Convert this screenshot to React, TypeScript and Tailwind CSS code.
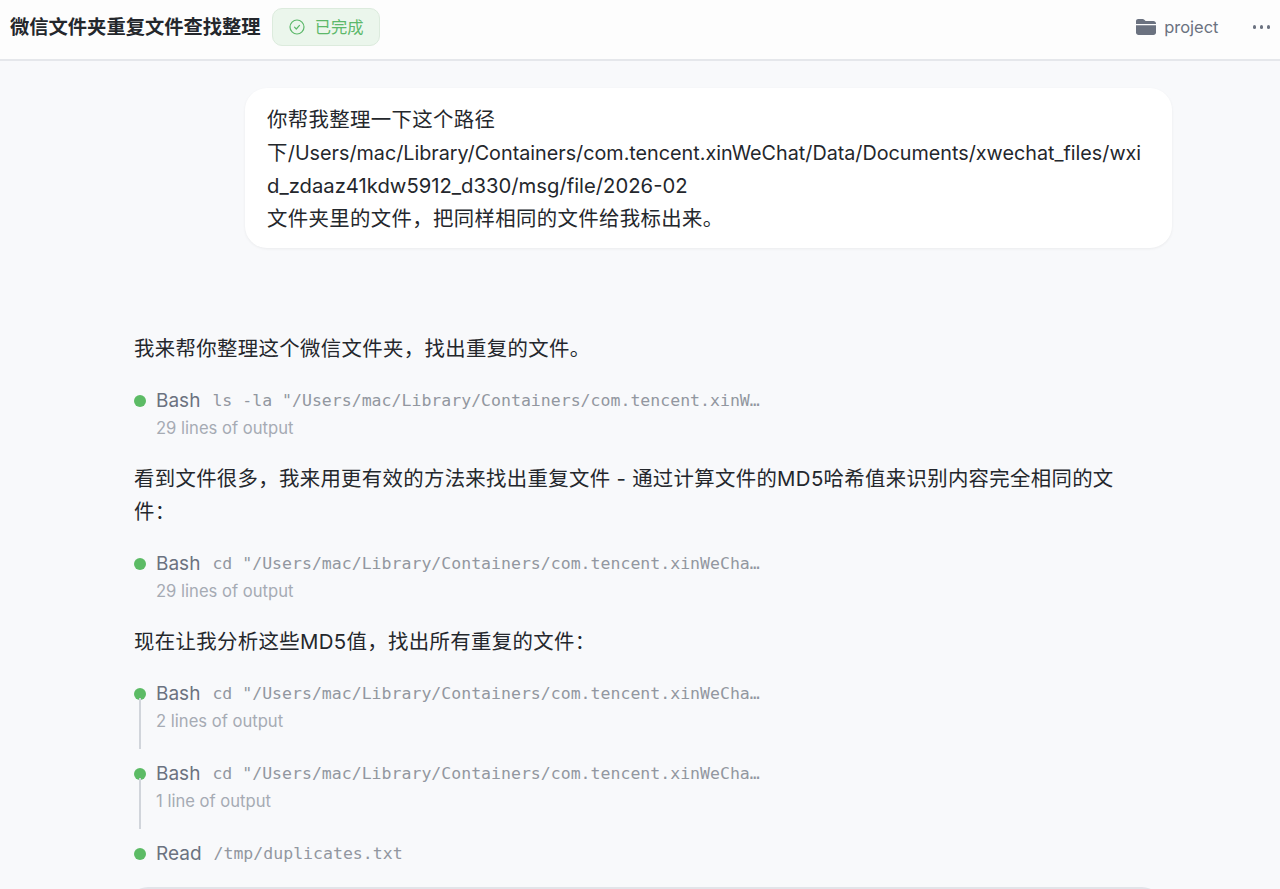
import React from 'react';

const SANS = "font-['Inter','Noto_Sans_CJK_SC',sans-serif]";
const BODY = 'text-[20.4px] tracking-[0.36px] text-[#24272c]';

interface ToolRowProps {
  name: string;
  arg: string;
  output?: string;
  connector?: boolean;
}

const ToolRow: React.FC<ToolRowProps> = ({ name, arg, output, connector }) => {
  return (
    <div className="relative pl-[22px]">
      <span className="absolute left-0 top-[8px] h-[11.5px] w-[11.5px] rounded-full bg-[#5cbb65]" />
      {connector && <span className="absolute left-[5px] top-[18px] h-[51px] w-[1.5px] bg-[#d1d5db]" />}
      <div className="flex h-[28px] items-center whitespace-nowrap">
        <span className="text-[19px] text-[#6b7280]">{name}</span>
        <span className="ml-[12px] pt-[1px] font-['DejaVu_Sans_Mono',monospace] text-[16.55px] text-[#9297a0]">{arg}</span>
      </div>
      {output && <div className="h-[28px] text-[16.6px] leading-[26px] text-[#a6abb4]">{output}</div>}
    </div>
  );
};

const App: React.FC = () => {
  return (
    <div className={`h-[889px] w-[1280px] overflow-hidden bg-[#f8f9fb] ${SANS}`}>
      <header className="flex h-[61px] items-center justify-between border-b-2 border-[#e5e7eb] bg-[#fdfdfd] pb-[5px] pl-[10px] pr-[10px]">
        <div className="flex items-center">
          <h1 className="text-[19.3px] font-semibold text-[#24272c]">微信文件夹重复文件查找整理</h1>
          <div className="ml-[11px] flex h-[38px] w-[108px] items-center rounded-[10px] border border-[#dcebdd] bg-[#ebf6ec] pl-[16px] text-[16.3px] text-[#5cb86a]">
            <svg width="16" height="16" viewBox="0 0 16 16" fill="none" stroke="currentColor" strokeWidth="1.2" strokeLinecap="round" strokeLinejoin="round">
              <circle cx="8" cy="8" r="7" />
              <path d="M5.5 8.2 7.3 10l3.2-3.6" />
            </svg>
            <span className="ml-[10px]">已完成</span>
          </div>
        </div>
        <div className="flex items-center">
          <svg width="20" height="18" viewBox="0 0 20 18" fill="#6b7280">
            <path d="M0 3.2C0 1.8 1 1 2.2 1h4.4c.7 0 1.2.2 1.7.7L9.6 3h7.8C18.9 3 20 4 20 5.4V6H0V3.2Z" />
            <path d="M0 7.2h20v7.4c0 1.4-1.1 2.4-2.6 2.4H2.6C1.1 17 0 16 0 14.6V7.2Z" />
          </svg>
          <span className="ml-[8px] text-[16.5px] text-[#6b7280]">project</span>
          <div className="ml-[34px] flex gap-[3.5px]">
            <span className="h-[3.5px] w-[3.5px] rounded-full bg-[#6b7280]" />
            <span className="h-[3.5px] w-[3.5px] rounded-full bg-[#6b7280]" />
            <span className="h-[3.5px] w-[3.5px] rounded-full bg-[#6b7280]" />
          </div>
        </div>
      </header>

      <main className="relative px-[134px] pt-[27px]">
        <div className={`ml-[111px] w-[927px] whitespace-nowrap rounded-[22px] bg-white px-[22px] pb-[13px] pt-[15px] leading-[33px] shadow-[0_1px_3px_rgba(0,0,0,0.06)] ${BODY}`}>
          你帮我整理一下这个路径
          <br />
          下<span className="text-[19.76px] leading-none tracking-normal">/Users/mac/Library/Containers/com.tencent.xinWeChat/Data/Documents/xwechat_files/wxi</span>
          <br />
          <span className="text-[20.25px] leading-none tracking-normal">d_zdaaz41kdw5912_d330/msg/file/2026-02</span>
          <br />
          文件夹里的文件，把同样相同的文件给我标出来。
        </div>

        <p className={`mt-[84px] leading-[33px] ${BODY}`}>我来帮你整理这个微信文件夹，找出重复的文件。</p>

        <div className="mt-[22px]">
          <ToolRow name="Bash" arg={'ls -la "/Users/mac/Library/Containers/com.tencent.xinW…'} output="29 lines of output" />
        </div>

        <p className="mt-[20px] w-[985px] text-[20.4px] leading-[32.5px] tracking-[0.32px] text-[#24272c]">
          看到文件很多，我来用更有效的方法来找出重复文件 - 通过计算文件的MD5哈希值来识别内容完全相同的文件：
        </p>

        <div className="mt-[22px]">
          <ToolRow name="Bash" arg={'cd "/Users/mac/Library/Containers/com.tencent.xinWeCha…'} output="29 lines of output" />
        </div>

        <p className={`mt-[19px] leading-[33px] ${BODY}`}>现在让我分析这些MD5值，找出所有重复的文件：</p>

        <div className="mt-[22px] flex flex-col gap-[24px]">
          <ToolRow name="Bash" arg={'cd "/Users/mac/Library/Containers/com.tencent.xinWeCha…'} output="2 lines of output" connector />
          <ToolRow name="Bash" arg={'cd "/Users/mac/Library/Containers/com.tencent.xinWeCha…'} output="1 line of output" connector />
          <ToolRow name="Read" arg="/tmp/duplicates.txt" />
        </div>

        <div className="mt-[19px] ml-[-6px] h-[60px] w-[1034px] rounded-t-[20px] border-t-2 border-[#e2e4e9] bg-white" />
      </main>
    </div>
  );
};

export default App;
